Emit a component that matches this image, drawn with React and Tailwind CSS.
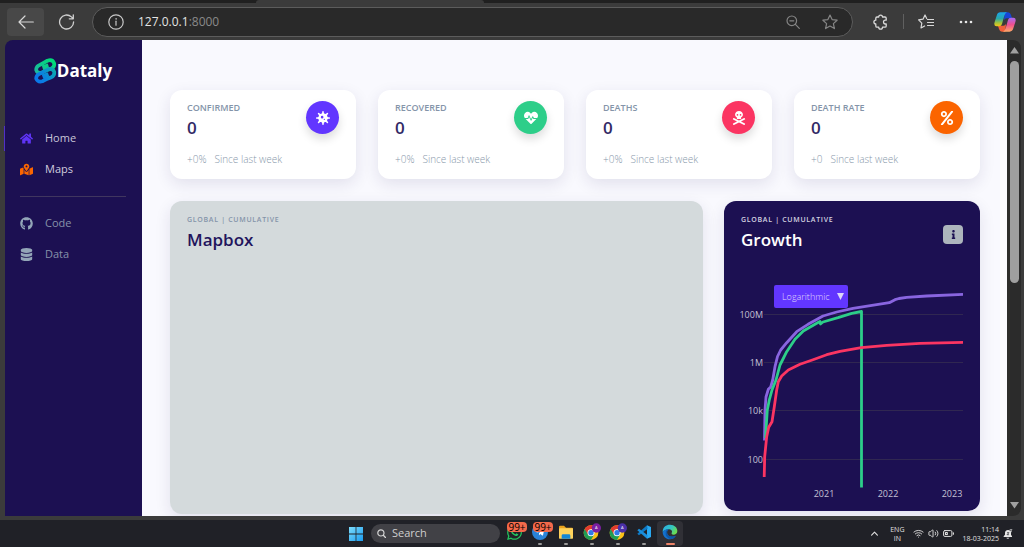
import React, { useState } from "react";
import {
  FaHome,
  FaMapMarkedAlt,
  FaGithub,
  FaDatabase,
  FaVirus,
  FaHeartbeat,
  FaSkullCrossbones,
  FaPercent,
  FaInfo,
  FaWhatsapp,
  FaTelegramPlane,
} from "react-icons/fa";
import { Wifi, Volume2 } from "lucide-react";

/* ---------- Browser toolbar ---------- */

function IconSvg({ className = "size-5", children, viewBox = "0 0 20 20" }) {
  return (
    <svg
      className={className}
      viewBox={viewBox}
      fill="none"
      stroke="currentColor"
      strokeLinecap="round"
      strokeLinejoin="round"
      aria-hidden="true"
    >
      {children}
    </svg>
  );
}

function CopilotLogo() {
  return (
    <svg className="h-5 w-[22px]" viewBox="0 0 66 60" aria-hidden="true">
      <defs>
        <linearGradient id="cpA" x1="0" y1="0" x2="0" y2="1">
          <stop offset="0" stopColor="#1aa5ee" />
          <stop offset="0.45" stopColor="#2aa9a8" />
          <stop offset="0.75" stopColor="#a4c23b" />
          <stop offset="1" stopColor="#f5c518" />
        </linearGradient>
        <linearGradient id="cpB" x1="0" y1="0" x2="0" y2="1">
          <stop offset="0" stopColor="#a56cf5" />
          <stop offset="0.5" stopColor="#ee4f8f" />
          <stop offset="1" stopColor="#ffa868" />
        </linearGradient>
      </defs>
      <path d="M32 1h10q7 0 9 8l3 10H38q-6 0-8 6z" fill="#1746d8" />
      <path d="M34 59H24q-7 0-9-8l-3-10h16q6 0 8-6z" fill="#f2603a" />
      <path d="M19 1h20q-6 3-8 10l-7 25q-2 7-9 7H8Q-2 43 2 30L8 11Q11 1 19 1z" fill="url(#cpA)" />
      <path d="M47 59H27q6-3 8-10l7-25q2-7 9-7h7q10 0 6 13l-6 19q-3 10-11 10z" fill="url(#cpB)" />
    </svg>
  );
}

function Toolbar() {
  return (
    <header className="shrink-0 bg-[#3b3b3b]">
      <div className="flex h-[3px] bg-[#202020]">
        <div className="w-1/4" />
        <div className="w-[228px] rounded-t-sm bg-[#3b3b3b]" />
      </div>
      <div className="flex h-[37px] items-center pl-[7px] pr-2">
        <button aria-label="Back" className="flex h-7 w-[37px] items-center justify-center rounded bg-[#484848] text-[#d8d8d8]">
          <IconSvg className="h-4 w-4" viewBox="0 0 16 16">
            <path d="M15.3 8H1M7 2 1 8l6 6" strokeWidth="1.2" />
          </IconSvg>
        </button>
        <button aria-label="Refresh" className="ml-[14px] text-[#d0d0d0]">
          <IconSvg className="h-4 w-[17px]" viewBox="0 0 17 16">
            <path d="M15.6 8a7 7 0 1 1-2.200-5.100l1.700 1.600M15.300.8v4h-4" strokeWidth="1.3" />
          </IconSvg>
        </button>
        <div className="ml-[17px] flex h-[30px] min-w-0 flex-1 items-center rounded-full border border-[#5c5c5c] bg-[#292929] pl-[15px] pr-[14px]">
          <button aria-label="Site information" className="text-[#c8c8c8]">
            <IconSvg className="size-4" viewBox="0 0 16 16">
              <circle cx="8" cy="8" r="7.2" strokeWidth="1.2" />
              <path d="M8 7.2v4" strokeWidth="1.2" />
              <circle cx="8" cy="4.9" r=".4" fill="currentColor" strokeWidth=".6" />
            </IconSvg>
          </button>
          <a href="#home" className="ml-[14px] flex-1 text-xs text-[#e4e4e4]">
            127.0.0.1<span className="text-[#8a8a8a]">:8000</span>
          </a>
          <button aria-label="Zoom" className="text-[#858585]">
            <IconSvg className="size-[14px]" viewBox="0 0 14 14">
              <circle cx="5.8" cy="5.8" r="4.8" strokeWidth="1.2" />
              <path d="M9.4 9.4 13.3 13.3M3.8 5.8h4" strokeWidth="1.2" />
            </IconSvg>
          </button>
          <button aria-label="Add to favorites" className="ml-[22px] text-[#858585]">
            <IconSvg className="size-4" viewBox="0 0 16 16">
              <path d="m8 1 2.1 4.6 5 .6-3.7 3.4 1 5L8 12.1l-4.4 2.5 1-5L.9 6.2l5-.6z" strokeWidth="1.2" />
            </IconSvg>
          </button>
        </div>
        <button aria-label="Extensions" className="ml-5 text-[#dadada]">
          <IconSvg className="size-4" viewBox="0 0 16 16">
            <path
              d="M4 3h1.700a1.900 1.900 0 0 1 3.800 0H12q1.200 0 1.200 1.200v2h-.8a1.900 1.900 0 0 0 0 3.800h.8v2q0 1.200-1.200 1.200H9.500a1.900 1.900 0 0 1-3.800 0H4q-1.200 0-1.200-1.200V10a1.900 1.900 0 0 1 0-3.800v-2Q2.800 3 4 3z"
              strokeWidth="1.300"
            />
          </IconSvg>
        </button>
        <span className="ml-[14px] h-[15px] w-px bg-[#606060]" />
        <button aria-label="Favorites" className="ml-[14px] text-[#d8d8d8]">
          <IconSvg className="size-4" viewBox="0 0 16 16">
            <path d="M8.7 4.5 7 1 5 5.2l-4.4.6 3.2 3.3-.8 4.9 3.6-2M9.500 5.500h6M9.500 8.500h6M9.500 11.500h6" strokeWidth="1.2" />
          </IconSvg>
        </button>
        <button aria-label="Settings and more" className="ml-[25px] text-[#e8e8e8]">
          <svg className="h-4 w-[14px]" viewBox="0 0 14 16" fill="currentColor" aria-hidden="true">
            <circle cx="2" cy="8" r="1.3" />
            <circle cx="7" cy="8" r="1.3" />
            <circle cx="12" cy="8" r="1.3" />
          </svg>
        </button>
        <button aria-label="Copilot" className="ml-[21px]">
          <CopilotLogo />
        </button>
      </div>
    </header>
  );
}

/* ---------- Sidebar ---------- */

function DatalyMark() {
  return (
    <svg className="h-[26px] w-[23px]" viewBox="103 171 68 78" aria-hidden="true">
      <defs>
        <linearGradient id="markTop" gradientUnits="userSpaceOnUse" x1="155" y1="175" x2="110" y2="220">
          <stop offset="0" stopColor="#00dc78" />
          <stop offset="1" stopColor="#1cb5a0" />
        </linearGradient>
        <linearGradient id="markLow" gradientUnits="userSpaceOnUse" x1="168" y1="205" x2="118" y2="240">
          <stop offset="0" stopColor="#0bb0a8" />
          <stop offset="0.6" stopColor="#0a86dc" />
          <stop offset="1" stopColor="#0a78e8" />
        </linearGradient>
      </defs>
      <g fill="none" strokeWidth="11">
        <g stroke="url(#markTop)">
          <path d="M116 194Q132 186 143 179Q158 174 163 187Q165 198 154 203Q138 206 126 215Q113 219 109 207Q109 198 116 194z" />
          <path d="M128 200 146 194" strokeWidth="14" />
        </g>
        <g stroke="url(#markLow)">
          <path d="M116 220Q132 212 145 205Q158 201 163 212Q165 224 154 229Q140 232 128 241Q114 245 109 233Q109 224 116 220z" />
          <path d="M128 227 146 220" strokeWidth="14" />
        </g>
      </g>
    </svg>
  );
}

function NavItem({ icon: Icon, label, iconClass, textClass, active }) {
  return (
    <li className="relative">
      {active && <span className="absolute -left-4 top-[3px] h-[25px] w-px bg-[#5030c8]" />}
      <a href={"#" + label.toLowerCase()} className={"flex h-[31px] items-center gap-3 text-[11px] " + textClass}>
        <Icon className={"size-[13px] " + iconClass} />
        {label}
      </a>
    </li>
  );
}

function Sidebar() {
  return (
    <aside className="flex w-[137px] shrink-0 flex-col rounded-tl-lg bg-[#1c1052] pl-[15px] pr-4 pt-[17px]">
      <a href="#home" className="flex items-center self-center text-[17px] font-bold leading-7 text-white">
        <DatalyMark />
        Dataly
      </a>
      <nav className="mt-[38px]">
        <ul>
          <NavItem icon={FaHome} label="Home" iconClass="text-[#5f34f5]" textClass="text-[#c9c6d8]" active />
          <NavItem icon={FaMapMarkedAlt} label="Maps" iconClass="text-[#fb6500]" textClass="text-[#d0cdde]" />
        </ul>
        <hr className="my-[11px] border-[#40365f]" />
        <ul>
          <NavItem icon={FaGithub} label="Code" iconClass="text-[#93a5b8]" textClass="text-[#8792a9]" />
          <NavItem icon={FaDatabase} label="Data" iconClass="text-[#93a5b8]" textClass="text-[#8792a9]" />
        </ul>
      </nav>
    </aside>
  );
}

/* ---------- Dashboard ---------- */

const stats = [
  { label: "CONFIRMED", delta: "+0%", icon: FaVirus, color: "bg-[#6236ff]" },
  { label: "RECOVERED", delta: "+0%", icon: FaHeartbeat, color: "bg-[#2dce89]" },
  { label: "DEATHS", delta: "+0%", icon: FaSkullCrossbones, color: "bg-[#fb3562]" },
  { label: "DEATH RATE", delta: "+0", icon: FaPercent, color: "bg-[#fb6400]" },
];

function StatCard({ label, delta, icon: Icon, color }) {
  return (
    <section className="rounded-xl bg-white px-[17px] pb-3 pt-[10px] shadow-[0_5px_16px_rgba(40,30,90,0.11)]">
      <div className="flex items-start justify-between">
        <div>
          <h2 className="text-[9px] font-semibold leading-4 text-[#8494a9]">{label}</h2>
          <p className="text-[17px] font-semibold leading-6 text-[#322a66]">0</p>
        </div>
        <span className={"mt-px flex size-[33px] items-center justify-center rounded-full text-white shadow-[0_5px_10px_rgba(0,0,0,0.14)] " + color}>
          <Icon className="size-[14px]" />
        </span>
      </div>
      <p className="mt-[11px] flex gap-2 text-[10px] font-light leading-4 text-[#8898aa]">
        <span>{delta}</span>
        <span>Since last week</span>
      </p>
    </section>
  );
}

const gridRows = [
  { y: 314, label: "100M" },
  { y: 362, label: "1M" },
  { y: 410, label: "10k" },
  { y: 459, label: "100" },
];

const years = [
  { x: 824, label: "2021" },
  { x: 888, label: "2022" },
  { x: 952, label: "2023" },
];

function GrowthChart() {
  return (
    <svg className="block w-full" viewBox="724 265 256 246" role="img" aria-label="Cumulative growth">
      <g stroke="#302751" strokeWidth="1">
        {gridRows.map((r) => (
          <path key={r.label} d={"M764 " + (r.y + 0.5) + "H963"} />
        ))}
      </g>
      <g fill="#c4c1d4" fontSize="9">
        {gridRows.map((r) => (
          <text key={r.label} x="763" y={r.y + 4} textAnchor="end">
            {r.label}
          </text>
        ))}
        {years.map((r) => (
          <text key={r.label} x={r.x} y="497" textAnchor="middle">
            {r.label}
          </text>
        ))}
      </g>
      <g fill="none" strokeWidth="2.8" strokeLinejoin="round">
        <path
          stroke="#8965e0"
          d="M764.5 440.5 765 410 766 397 768.3 389.3 770.7 387 772.7 380 775 366.7 777.5 356.5 780.7 350 786.7 342.7 796.7 331.7 808 324.3 823 316 836.7 312 853 308.3 889.3 302.7 895 299.7 899 298.5 906.7 297.3 926.7 296 963 294.4"
        />
        <path
          stroke="#2dce89"
          d="M765.5 438 767.3 410 769.3 400 772 390 776 380 780 365 786.7 351.7 795 339.3 803.3 331 816.7 323.3 820 321.5 820.5 324 823 322 838 317.7 851.7 313.3 861.5 311.5V487.5"
        />
        <path
          stroke="#fb3562"
          d="M764.2 477 764.7 456.7 766.7 436.7 768.7 427.3 772 421.7 774.3 406.7 776.7 390 778.3 381.7 781.7 376 788.3 370 800 364.3 813 359.7 826.7 354.7 840 351.3 861.3 347.7 886.7 345.3 920 343.3 963 342.4"
        />
      </g>
    </svg>
  );
}

function PanelTitle({ title, overClass, titleClass }) {
  return (
    <div>
      <p className={"text-[7px] font-semibold leading-3 tracking-widest " + overClass}>GLOBAL | CUMULATIVE</p>
      <h2 className={"text-[17px] font-semibold leading-7 " + titleClass}>{title}</h2>
    </div>
  );
}

function GrowthCard() {
  const [scale, setScale] = useState("Logarithmic");
  return (
    <section className="relative rounded-xl bg-[#1c1052] shadow-[0_5px_16px_rgba(40,30,90,0.11)]">
      <div className="flex h-16 items-start justify-between px-[17px] pt-[13px]">
        <PanelTitle title="Growth" overClass="text-[#d4d2e0]" titleClass="text-white" />
        <button aria-label="About this chart" className="mt-[11px] flex h-[19px] w-5 items-center justify-center rounded bg-[#adb5bd] text-[#1c1052]">
          <FaInfo className="size-[9px]" />
        </button>
      </div>
      <div className="absolute left-[50px] top-[84px] flex items-center">
        <select
          aria-label="Scale"
          value={scale}
          onChange={(e) => setScale(e.target.value)}
          className="h-[23px] w-[74px] appearance-none rounded-[2px] bg-[#6236ff] pl-2 text-[9px] font-light text-[#e0dafc]"
        >
          <option>Logarithmic</option>
          <option>Linear</option>
        </select>
        <svg className="pointer-events-none absolute right-1 size-[7px]" viewBox="0 0 7 7" aria-hidden="true">
          <path d="M0 0h7L3.5 7z" fill="#dcd6fa" />
        </svg>
      </div>
      <GrowthChart />
    </section>
  );
}

function Dashboard() {
  return (
    <main className="min-w-0 flex-1 overflow-hidden bg-[#f9f9fe] pl-7 pr-[27px] pt-[50px]">
      <div className="grid grid-cols-4 gap-[22px]">
        {stats.map((s) => (
          <StatCard key={s.label} {...s} />
        ))}
      </div>
      <div className="mt-[22px] grid grid-cols-[533fr_256fr] items-start gap-[21px]">
        <section className="min-h-[313px] rounded-xl bg-[#d4dadc] px-[17px] pt-[13px] shadow-[0_5px_16px_rgba(40,30,90,0.11)]">
          <PanelTitle title="Mapbox" overClass="text-[#8494a9]" titleClass="text-[#22145c]" />
        </section>
        <GrowthCard />
      </div>
    </main>
  );
}

function ScrollRail() {
  return (
    <div className="flex w-[14px] shrink-0 flex-col items-center rounded-r-lg bg-[#2b2b2b] py-[7px]">
      <svg className="h-[7px] w-[9px]" viewBox="0 0 9 7" aria-hidden="true">
        <path d="M4.5 0 9 6.5H0z" fill="#a0a0a0" />
      </svg>
      <div className="mt-[7px] h-[48%] w-[9px] rounded-full bg-[#9f9f9f]" />
      <svg className="mt-auto h-[7px] w-[9px]" viewBox="0 0 9 7" aria-hidden="true">
        <path d="M4.5 6.5 9 0H0z" fill="#a0a0a0" />
      </svg>
    </div>
  );
}

/* ---------- Taskbar ---------- */

function ChromeLogo({ badge }) {
  return (
    <svg className="h-5 w-[18px]" viewBox="0 0 54 60" aria-hidden="true">
      <circle cx="24" cy="32" r="22" fill="#fbc116" />
      <path d="M24 32 5 21a22 22 0 0 0 19 33l10-17z" fill="#1f9d55" />
      <path d="M24 21h19a22 22 0 0 0-38 0l10 17z" fill="#e33b2e" />
      <circle cx="24" cy="32" r="10.5" fill="#fff" />
      <circle cx="24" cy="32" r="8" fill="#2f7be8" />
      <circle cx="40" cy="18" r="14" fill={badge} />
      <text x="40" y="22" fontSize="12" textAnchor="middle" fill="#fff">
        A
      </text>
    </svg>
  );
}

function FolderLogo() {
  return (
    <svg className="h-4 w-4" viewBox="0 0 48 48" aria-hidden="true">
      <path d="M3 8q0-3 3-3h12l6 6h18q3 0 3 3v6H3z" fill="#e9a21c" />
      <rect x="3" y="13" width="42" height="31" rx="2" fill="#fdd25c" />
      <path d="M11 44v-9q0-4 4-4h18q4 0 4 4v9z" fill="#1587d6" />
    </svg>
  );
}

function CodeLogo() {
  return (
    <svg className="h-4 w-4" viewBox="0 0 48 48" aria-hidden="true">
      <path d="m33 4 12 5v30l-12 5z" fill="#29a9f2" />
      <path d="m33 4-29 25 5 5 26-20z" fill="#0e79c4" />
      <path d="M33 44 4 19l5-5 26 20z" fill="#1a8fdc" />
    </svg>
  );
}

function EdgeLogo() {
  return (
    <svg className="h-4 w-4" viewBox="0 0 48 48" aria-hidden="true">
      <defs>
        <linearGradient id="edgeTop" x1="0" y1="0" x2="1" y2="0.5">
          <stop offset="0" stopColor="#28a9e8" />
          <stop offset="0.6" stopColor="#34c6c0" />
          <stop offset="1" stopColor="#6bdc52" />
        </linearGradient>
      </defs>
      <path d="M2 24C2 8 12 2 24 2c14 0 22 9 22 19 0 8-6 11-11 11-6 0-7-3-6-5 4-7-3-11-9-11-9 0-15 5-18 8z" fill="url(#edgeTop)" />
      <path d="M2 24c4-6 10-9 18-8-5 3-7 9-4 15 3 7 12 10 25 5-4 6-10 10-17 10C11 46 2 36 2 24z" fill="#1371cc" />
      <path d="M20 16c-4 3-6 9-3 15 4 7 13 9 25 4-4 8-12 11-18 10-9-3-14-10-13-18 0-6 4-10 9-11z" fill="#0d57a8" />
    </svg>
  );
}

function TaskButton({ label, children, count, bar = "w-1 bg-[#9a9a9a]", active }) {
  return (
    <button aria-label={label} className={"relative flex h-[25px] w-[26px] flex-col items-center rounded " + (active ? "bg-[#303036]" : "")}>
      <span className="flex h-[22px] items-center justify-center">{children}</span>
      <span className={"h-[2px] rounded-full " + bar} />
      {count && (
        <span className="absolute left-[6px] top-px flex h-[10px] w-5 items-center justify-center rounded-sm bg-[#f4694b] text-[10px] text-black">
          {count}
        </span>
      )}
    </button>
  );
}

function Taskbar() {
  return (
    <footer className="relative flex h-[27px] shrink-0 items-center justify-center bg-[#202127] pl-2">
      <div className="flex items-center">
        <button aria-label="Start" className="mr-2">
          <svg className="size-[14px]" viewBox="0 0 14 14" aria-hidden="true">
            <defs>
              <linearGradient id="win" x1="0" y1="0" x2="1" y2="1">
                <stop offset="0" stopColor="#7ddcfb" />
                <stop offset="1" stopColor="#1a9cf0" />
              </linearGradient>
            </defs>
            <path d="M0 0h6.6v6.6H0zM7.4 0H14v6.6H7.4zM0 7.4h6.6V14H0zM7.4 7.4H14V14H7.4z" fill="url(#win)" />
          </svg>
        </button>
        <label className="flex h-[19px] w-[129px] items-center gap-[6px] rounded-full bg-[#414146] pl-[6px] text-[#d5d5d5]">
          <IconSvg className="size-[9px] shrink-0" viewBox="0 0 9 9">
            <circle cx="3.9" cy="3.9" r="3.1" strokeWidth="1.2" />
            <path d="m6.3 6.3 2.2 2.2" strokeWidth="1.3" />
          </IconSvg>
          <input aria-label="Search" placeholder="Search" className="w-20 bg-transparent text-[11px] outline-none placeholder:text-[#cfcfcf]" />
        </label>
        <div className="ml-px flex">
          <TaskButton label="WhatsApp" count="99+" bar="w-0">
            <FaWhatsapp className="size-[17px] text-[#23c45e]" />
          </TaskButton>
          <TaskButton label="Telegram" count="99+">
            <span className="flex size-4 items-center justify-center rounded-full bg-[#2a83d8]">
              <FaTelegramPlane className="size-[10px] text-white" />
            </span>
          </TaskButton>
          <TaskButton label="File Explorer">
            <FolderLogo />
          </TaskButton>
          <TaskButton label="Chrome, first profile">
            <ChromeLogo badge="#7b1fa2" />
          </TaskButton>
          <TaskButton label="Chrome, second profile">
            <ChromeLogo badge="#4a2fa8" />
          </TaskButton>
          <TaskButton label="Visual Studio Code">
            <CodeLogo />
          </TaskButton>
          <TaskButton label="Edge" active bar="w-[9px] bg-[#ef8468]">
            <EdgeLogo />
          </TaskButton>
        </div>
      </div>
      <div className="absolute inset-y-0 right-[11px] flex items-center text-[#e0e0e0]">
        <IconSvg className="h-[5px] w-[7px]" viewBox="0 0 7 5">
          <path d="M.6 4.2 3.5 1.2l2.9 3" strokeWidth="1.1" />
        </IconSvg>
        <div className="ml-3 text-center text-[7px] leading-[9px]">
          ENG
          <br />
          IN
        </div>
        <Wifi className="ml-[9px] size-[11px]" />
        <Volume2 className="ml-1 size-[11px]" />
        <IconSvg className="ml-1 h-[7px] w-[11px]" viewBox="0 0 11 7">
          <rect x=".6" y=".6" width="8.3" height="5.8" rx="1.2" strokeWidth="1" />
          <path d="M2.5 2.5v2h1.8v-2zM10.4 2.7v1.6" strokeWidth="1.1" />
        </IconSvg>
        <div className="ml-2 text-right text-[7px] leading-[9px]">
          11:14
          <br />
          18-03-2025
        </div>
        <svg className="ml-1 size-[10px]" viewBox="0 0 30 30" fill="#e6e6e6" role="img" aria-label="Notifications">
          <path d="M2 22 6 17v-6Q7 3 15 3q9 0 9 8v6l3 5v2H2zM10 26h9q-1 3-4.500 3T10 26z" />
          <path d="M20 2h7l-6 6h6" stroke="#e6e6e6" strokeWidth="2" fill="none" />
          <path d="M12 11h6l-6 6h6" stroke="#202127" strokeWidth="2" fill="none" />
        </svg>
      </div>
    </footer>
  );
}

export default function App() {
  return (
    <div className="flex h-screen flex-col overflow-hidden bg-[#3b3b3b] font-['Open_Sans','Noto_Sans',sans-serif]">
      <Toolbar />
      <div className="mb-1 flex min-h-0 flex-1 pl-[5px] pr-[3px]">
        <Sidebar />
        <Dashboard />
        <ScrollRail />
      </div>
      <Taskbar />
    </div>
  );
}
